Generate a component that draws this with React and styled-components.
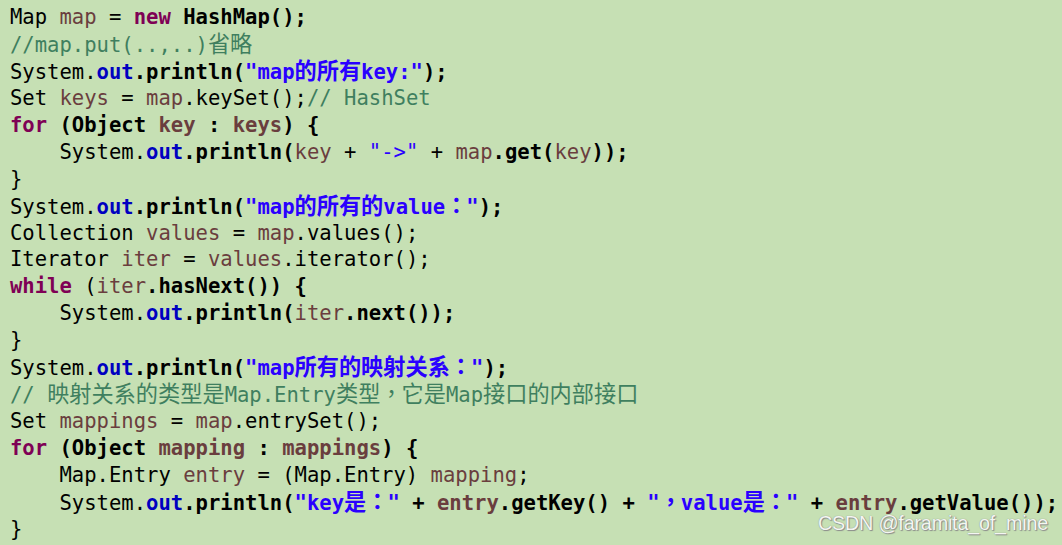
import React from 'react';
import styled, { createGlobalStyle } from 'styled-components';

const GlobalStyle = createGlobalStyle`
    html, body {
        margin: 0;
        padding: 0;
        background: #c6e0b4;
    }
`;

// token colours, eclipse style
const colors = {
    t: '#000000',
    k: '#7f0055',
    v: '#6a3e3e',
    f: '#0000c0',
    s: '#2a00ff',
    c: '#3f7f5f',
};

const Sheet = styled.div`
    position: relative;
    width: 1062px;
    height: 545px;
    box-sizing: border-box;
    padding: 4px 0 0 10px;
    background: #c6e0b4;
    overflow: hidden;
    font-family: "DejaVu Sans Mono", "Liberation Mono", monospace;
    font-size: 20.55px;
    line-height: 26.95px;
`;

const Line = styled.div`
    display: block;
    height: 26.95px;
    white-space: pre;
`;

const Tok = styled.span`
    color: ${p => colors[p.$kind] || '#000'};
    font-weight: ${p => (p.$bold ? 700 : 400)};
`;

const Cjk = styled.span`
    font-family: "Noto Sans CJK TC", "Noto Sans CJK SC", sans-serif;
    font-size: 22.2px;
    line-height: 1;
`;

// fullwidth punctuation sits a little tighter in the shot
const Punct = styled.span`
    letter-spacing: -1px;
`;

const Watermark = styled.div`
    position: absolute;
    right: 14px;
    bottom: 9px;
    font-family: "Liberation Sans", Arial, sans-serif;
    font-size: 19.8px;
    line-height: 1.2;
    color: #f4f6f2;
    text-shadow: 0 0 1px #7a7a7a, 1px 1px 1px #8c8c8c;
    letter-spacing: -0.2px;
`;

const B = true;

const code = [
    [['Map '], ['map', 'v'], [' = '], ['new', 'k', B], [' HashMap();', 't', B]],
    [['//map.put(..,..)省略', 'c']],
    [['System.'], ['out', 'f', B], ['.println(', 't', B], ['"map的所有key:"', 's', B], [');', 't', B]],
    [['Set '], ['keys', 'v'], [' = '], ['map', 'v'], ['.keySet();'], ['// HashSet', 'c']],
    [['for', 'k', B], [' (Object ', 't', B], ['key', 'v', B], [' : ', 't', B], ['keys', 'v', B], [') {', 't', B]],
    [['    System.'], ['out', 'f', B], ['.println(', 't', B], ['key', 'v'], [' + '], ['"->"', 's'], [' + '], ['map', 'v'], ['.get(', 't', B], ['key', 'v'], ['));', 't', B]],
    [['}']],
    [['System.'], ['out', 'f', B], ['.println(', 't', B], ['"map的所有的value："', 's', B], [');', 't', B]],
    [['Collection '], ['values', 'v'], [' = '], ['map', 'v'], ['.values();']],
    [['Iterator '], ['iter', 'v'], [' = '], ['values', 'v'], ['.iterator();']],
    [['while', 'k', B], [' ('], ['iter', 'v'], ['.hasNext()) {', 't', B]],
    [['    System.'], ['out', 'f', B], ['.println(', 't', B], ['iter', 'v'], ['.next());', 't', B]],
    [['}']],
    [['System.'], ['out', 'f', B], ['.println(', 't', B], ['"map所有的映射关系："', 's', B], [');', 't', B]],
    [['// 映射关系的类型是Map.Entry类型，它是Map接口的内部接口', 'c']],
    [['Set '], ['mappings', 'v'], [' = '], ['map', 'v'], ['.entrySet();']],
    [['for', 'k', B], [' (Object ', 't', B], ['mapping', 'v', B], [' : ', 't', B], ['mappings', 'v', B], [') {', 't', B]],
    [['    Map.Entry '], ['entry', 'v'], [' = (Map.Entry) '], ['mapping', 'v'], [';']],
    [['    System.'], ['out', 'f', B], ['.println(', 't', B], ['"key是："', 's', B], [' + ', 't', B], ['entry', 'v', B], ['.getKey() + ', 't', B], ['"，value是："', 's', B], [' + ', 't', B], ['entry', 'v', B], ['.getValue());', 't', B]],
    [['}']],
];

const WIDE = /([\u3000-\u303f\u4e00-\u9fff\uff00-\uffef]+)/;
const PUNCT = /([\u3000-\u303f\uff00-\uffef])/;

// wide glyphs (CJK + fullwidth punctuation) go into their own span
const splitCjk = text =>
    text.split(WIDE).filter(Boolean).map((part, i) =>
        WIDE.test(part) ? (
            <Cjk key={i}>
                {part.split(PUNCT).filter(Boolean).map((p, j) =>
                    PUNCT.test(p) ? <Punct key={j}>{p}</Punct> : p
                )}
            </Cjk>
        ) : part
    );

export default function App() {
    return (
        <>
            <GlobalStyle />
            <Sheet>
                {code.map((tokens, i) => (
                    <Line key={i}>
                        {tokens.map(([text, kind = 't', bold = false], j) => (
                            <Tok key={j} $kind={kind} $bold={bold}>{splitCjk(text)}</Tok>
                        ))}
                    </Line>
                ))}
                <Watermark>CSDN @faramita_of_mine</Watermark>
            </Sheet>
        </>
    );
}
